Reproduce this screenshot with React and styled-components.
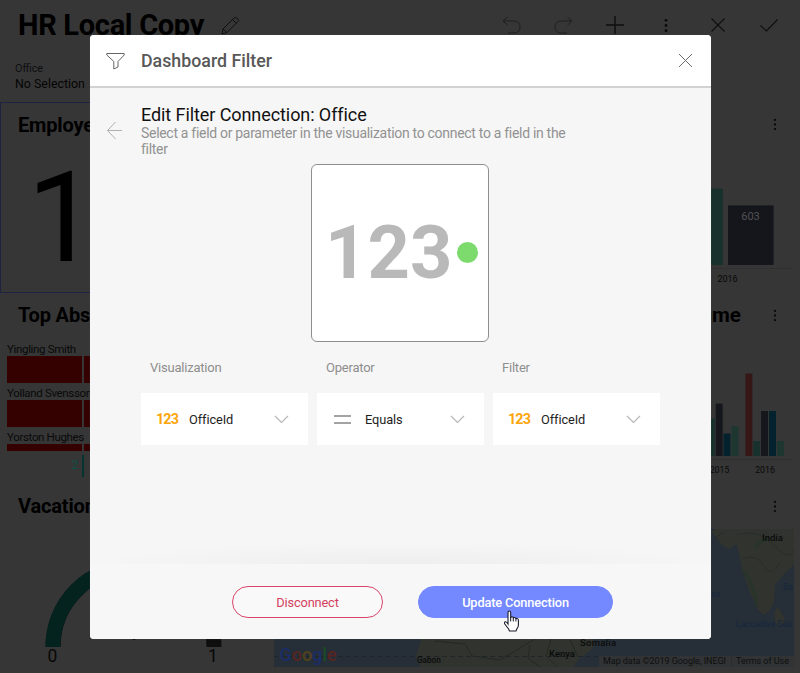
import React from "react";
import styled, { createGlobalStyle } from "styled-components";

const GlobalStyle = createGlobalStyle`
  *, *::before, *::after { box-sizing: border-box; }
  html, body { margin: 0; padding: 0; overflow: hidden; background: #363636; }
  body, button { font-family: Roboto, "Liberation Sans", sans-serif; }
  svg { display: block; flex: none; }
  svg text { font-family: Roboto, "Liberation Sans", sans-serif; }
`;

/* ---------- Dashboard ---------- */

const Dashboard = styled.div`
  width: 800px;
  height: 673px;
  display: flex;
  flex-direction: column;
  overflow: hidden;
  background: #363636;
  color: #000;
`;

const TopBar = styled.header`
  height: 60px;
  padding: 0 18px;
  display: flex;
  align-items: flex-start;
  justify-content: space-between;
`;

const TitleGroup = styled.div`
  display: flex;
  align-items: center;
  gap: 17px;
  height: 50px;
`;

const PageTitle = styled.h1`
  margin: 0;
  font-size: 29px;
  font-weight: 700;
  letter-spacing: -0.3px;
  line-height: 50px;
  white-space: nowrap;
`;

const Tools = styled.div`
  height: 50px;
  margin-right: 3px;
  display: flex;
  align-items: center;
  gap: 31.4px;
`;

const FilterSummary = styled.div`
  height: 42px;
  padding: 1px 15px 0;
`;

const FilterName = styled.div`
  font-size: 10.8px;
  line-height: 16px;
  color: #0f0f0f;
`;

const FilterValue = styled.div`
  font-size: 12.4px;
  line-height: 13px;
  color: #050505;
`;

const Panels = styled.main`
  height: 571px;
  display: grid;
  grid-template-columns: 266px 534px;
  grid-template-rows: 191px 191px 189px;
`;

const Panel = styled.section`
  display: flex;
  flex-direction: column;
  overflow: hidden;
  border: ${(p) => (p.$selected ? "1px solid #1d2340" : "0")};
`;

const PanelHeader = styled.div`
  height: ${(p) => (p.$inset ? 43 : 44)}px;
  flex: none;
  padding: 0 20px 0 ${(p) => (p.$inset ? 17 : 18)}px;
  display: flex;
  align-items: center;
  justify-content: ${(p) => (p.$end ? "flex-end" : "space-between")};
  gap: 29px;
`;

const PanelTitle = styled.h2`
  margin: 0;
  font-size: ${(p) => (p.$wide ? 20.6 : 20)}px;
  font-weight: 700;
  letter-spacing: ${(p) => (p.$wide ? 0 : -0.15)}px;
  line-height: 24px;
  white-space: nowrap;
`;

const BigNumber = styled.div`
  padding-left: 26px;
  font-size: 126px;
  line-height: 144px;
`;

const BarList = styled.div`
  padding: 5px 0 0 7px;
`;

const BarName = styled.div`
  height: ${(p) => p.$height}px;
  padding-top: ${(p) => p.$height - 14}px;
  font-size: 11.5px;
  letter-spacing: -0.34px;
  line-height: 14px;
  color: #090909;
  white-space: nowrap;
`;

const BarTrack = styled.div`
  display: grid;
  grid-template-columns: 75px 1fr;
  gap: 2px;
  height: ${(p) => p.$height}px;
`;

const BarFill = styled.span`
  background: #340000;
`;

const BarMark = styled.div`
  width: 77px;
  height: 22px;
  margin-top: 4px;
  padding-right: 4px;
  border-right: 2px solid #04342d;
  text-align: right;
  font-size: 12px;
  line-height: 21px;
  color: #0b5144;
`;

const MapBox = styled.div`
  padding: 1px 0 0 8px;
`;

/* ---------- Dialog ---------- */

const Overlay = styled.div`
  position: absolute;
  inset: 0 auto auto 0;
  width: 800px;
  height: 673px;
  padding: 35px 89px 34px 90px;
`;

const Dialog = styled.div`
  height: 604px;
  border-radius: 4px;
  overflow: hidden;
  display: flex;
  flex-direction: column;
  background: #f6f6f6;
  box-shadow: 0 0 1px #555;
`;

const DialogHeader = styled.div`
  height: 53px;
  flex: none;
  padding: 0 18px 0 16px;
  display: flex;
  align-items: center;
  background: #fff;
  border-bottom: 2px solid #d2d2d2;
`;

const DialogTitle = styled.div`
  flex: 1;
  margin-left: 16px;
  font-size: 17.8px;
  font-weight: 500;
  line-height: 24px;
  color: #585858;
`;

const DialogBody = styled.div`
  flex: 1;
  padding: 17px 51px 0 16px;
  display: flex;
  align-items: flex-start;
`;

const BackButton = styled.div`
  width: 35px;
  padding-top: 16px;
  flex: none;
`;

const Content = styled.div`
  flex: 1;
  display: flex;
  flex-direction: column;
`;

const Heading = styled.div`
  font-size: 18px;
  letter-spacing: -0.08px;
  line-height: 20px;
  color: #111;
`;

const Hint = styled.div`
  width: 440px;
  height: 39px;
  font-size: 14px;
  letter-spacing: -0.3px;
  line-height: 16px;
  color: #929292;
`;

const Preview = styled.div`
  width: 178px;
  height: 178px;
  margin-left: 170px;
  padding-left: 13px;
  border: 1px solid #8e8e8e;
  border-radius: 6px;
  background: #fff;
  display: flex;
  align-items: center;
`;

const PreviewDigits = styled.span`
  width: 132px;
  font-size: 74px;
  font-weight: 700;
  line-height: 80px;
  color: #b9b9b9;
`;

const Dot = styled.span`
  width: 21px;
  height: 21px;
  margin-top: -1px;
  border-radius: 50%;
  background: #7cdb6c;
`;

const Fields = styled.div`
  margin-top: 16px;
  display: grid;
  grid-template-columns: repeat(3, 167px);
  column-gap: 9px;
`;

const FieldLabel = styled.div`
  height: 35px;
  padding-left: 9px;
  font-size: 13px;
  letter-spacing: -0.22px;
  line-height: 20px;
  color: #8e8e8e;
`;

const Select = styled.div`
  height: 52px;
  padding: 0 19px 0 ${(p) => p.$left || 15}px;
  display: flex;
  align-items: center;
  background: #fff;
  font-size: 12.8px;
  letter-spacing: -0.1px;
  color: #1d1d1d;
`;

const SelectText = styled.span`
  flex: 1;
  margin-left: ${(p) => p.$gap || 10}px;
`;

const NumberType = styled.span`
  width: 23px;
  font-size: 14.4px;
  font-weight: 700;
  letter-spacing: -0.9px;
  color: #fca60c;
  white-space: nowrap;
`;

const FooterShade = styled.div`
  height: 22px;
  flex: none;
  background: radial-gradient(ellipse 50% 100% at 50% 100%, #eeeeee, #f6f6f6);
`;

const DialogFooter = styled.div`
  height: 75px;
  flex: none;
  padding: 22px 98px 0 142px;
  display: flex;
  justify-content: space-between;
  background: #f7f7f7;
`;

const Button = styled.button`
  width: ${(p) => p.$width}px;
  height: 32px;
  padding: 0;
  border: 1px solid ${(p) => (p.$primary ? "#7489ff" : "#d9456a")};
  border-radius: 16px;
  background: ${(p) => (p.$primary ? "#7489ff" : "#f9f9f9")};
  color: ${(p) => (p.$primary ? "#fff" : "#d33f60")};
  font-size: 12.8px;
  letter-spacing: -0.15px;
  font-weight: ${(p) => (p.$primary ? 500 : 400)};
`;

const Pointer = styled.svg`
  position: absolute;
  left: 502px;
  top: 609px;
`;

/* ---------- Icons ---------- */

const Icon = ({ d, w = 20, h = 20, stroke = "#0e0e0e", sw = 1 }) => (
  <svg width={w} height={h} viewBox={`0 0 ${w} ${h}`} fill="none" stroke={stroke} strokeWidth={sw}>
    <path d={d} />
  </svg>
);

const Kebab = ({ w = 10, r = 1.15, step = 4.6 }) => (
  <svg width={w} height="20" viewBox={`0 0 ${w} 20`} fill="#0a0a0a">
    {[-1, 0, 1].map((i) => (
      <circle key={i} cx={w / 2} cy={10.5 + i * step} r={r} />
    ))}
  </svg>
);

const Chevron = () => <Icon d="M1 1L7.5 7.5L14 1" w={15} h={9} stroke="#b5b5b5" sw={1.1} />;

/* ---------- Charts ---------- */

const bars = (list, base) =>
  list.map(([x, w, top, fill], i) => (
    <rect key={i} x={x} y={top} width={w} height={base - top} fill={fill} />
  ));

const HiringChart = () => (
  <svg width="534" height="147" viewBox="266 146 534 147">
    {bars([[678, 45, 188.7, "#19312d"], [728, 45.6, 205.4, "#15161b"]], 265)}
    <path d="M290 268.5H792" stroke="#303030" />
    <text x="750.5" y="220" fontSize="11" fill="#515253" textAnchor="middle">603</text>
    <text x="727.5" y="282" fontSize="9" fill="#070707" textAnchor="middle">2016</text>
  </svg>
);

const TimeChart = () => (
  <svg width="534" height="147" viewBox="266 337 534 147">
    {bars(
      [
        [707.5, 7.2, 418.5, "#19312d"],
        [715.7, 7, 403.6, "#16171c"],
        [723.5, 7, 433.5, "#04222d"],
        [731.5, 7, 426, "#1e3630"],
        [745.4, 7, 373.5, "#351718"],
        [753.2, 7, 441, "#19312d"],
        [761, 7, 411, "#16171c"],
        [769, 7, 411, "#04222d"],
        [777, 7, 441, "#1e3630"],
      ],
      456
    )}
    <path d="M290 459.5H792" stroke="#303030" />
    <text x="719.5" y="472.5" fontSize="8.7" fill="#090909" textAnchor="middle">2015</text>
    <text x="765" y="472.5" fontSize="8.7" fill="#090909" textAnchor="middle">2016</text>
  </svg>
);

const Gauge = () => (
  <svg width="266" height="143" viewBox="0 528 266 143">
    <path d="M53 647A80.5 80.5 0 0 1 214 647" fill="none" stroke="#0e0e0e" strokeWidth="15" />
    <path d="M53 647A80.5 80.5 0 0 1 133.5 566.5" fill="none" stroke="#04231f" strokeWidth="15" />
    <circle cx="134" cy="638" r="2" fill="#0b0b0b" />
    <text x="52.5" y="662" fontSize="17.5" fill="#070707" textAnchor="middle">0</text>
    <text x="213" y="662" fontSize="17.5" fill="#070707" textAnchor="middle">1</text>
  </svg>
);

const googleLetters = [
  ["G", "#1a2d66"], ["o", "#572423"], ["o", "#54421a"], ["g", "#1a2d66"], ["l", "#1a4a27"], ["e", "#572423"],
];

const WorldMap = () => (
  <svg width="520" height="138" viewBox="274 529 520 138">
    <rect x="274" y="529" width="520" height="138" fill="#262f37" />
    <g fill="#30332e">
      <path d="M418 630H594L594 646L590 651L578 660L574 667H420L416 655L421 640Z" />
      <path d="M715 529H794V565L783 575L775 585L774 603L770 610L764 615L758 610L749 590L742 570L738 549L736 544L730 549L722 545L716 537L711 532Z" />
      <path d="M777 606L781 612L785 619L782 625L776 623L774 615Z" />
    </g>
    <path d="M742 570Q753 580 757 607M755 548Q765 535 772 540" fill="none" stroke="#28342a" strokeWidth="3" />
    <path d="M435 641L465 644L472 656L500 660L520 648L535 639M530 645L528 658L540 667M551 639L546 656L557 667M570 640L578 657" fill="none" stroke="#232823" strokeWidth="1" />
    <path d="M737 535Q758 528 774 545T794 550M742 559Q757 553 764 566T780 562M724 532L715 538" fill="none" stroke="#292e29" strokeWidth="1" />
    <path d="M274 656.5H600" stroke="#1f2529" strokeDasharray="5 3" />
    <rect x="599" y="656" width="195" height="11" fill="#313334" />
    <g fontSize="9.5" fontWeight="500" fill="#0a0c0c">
      <text x="762" y="541">India</text>
      <text x="549" y="657">Kenya</text>
      <text x="580" y="645.5" textLength="36">Somalia</text>
      <text x="417" y="663" fontSize="8.2">Gabon</text>
    </g>
    <g fontSize="9" fill="#16263e">
      <text x="736" y="627" textLength="56">Laccadive Sea</text>
      <text x="783" y="590" fontSize="8.5">Ba</text>
      <text x="711" y="597">ea</text>
    </g>
    <g fontSize="9" fill="#0d0f10">
      <text x="603" y="664" textLength="123">Map data ©2019 Google, INEGI</text>
      <text x="736" y="664" textLength="53">Terms of Use</text>
    </g>
    <path d="M731.5 657V667" stroke="#292c2e" />
    <text x="279.5" y="661" fontSize="18" fontWeight="500">
      {googleLetters.map(([c, color], i) => (
        <tspan key={i} fill={color}>{c}</tspan>
      ))}
    </text>
  </svg>
);

const absences = [
  ["Yingling Smith", 14, 27],
  ["Yolland Svensson", 17, 27],
  ["Yorston Hughes", 17, 7],
];

const DialogField = ({ label, children }) => (
  <div>
    <FieldLabel>{label}</FieldLabel>
    {children}
  </div>
);

export default function App() {
  return (
    <>
      <GlobalStyle />
      <Dashboard>
        <TopBar>
          <TitleGroup>
            <PageTitle>HR Local Copy</PageTitle>
            <Icon d="M1 18L2 13L13 2Q14.5 .7 16.5 2.5T17 5.5L6 16.5ZM11.5 3.5L15.5 7.5M2 13L6 16.5" w={19} h={19} />
          </TitleGroup>
          <Tools>
            <Icon d="M5.5 2L1 6L5.5 10M1 6H12Q18 6 18 12T12 18H6" stroke="#1f1f1f" />
            <Icon d="M14.5 2L19 6L14.5 10M19 6H8Q2 6 2 12T8 18H14" stroke="#1f1f1f" />
            <Icon d="M10 1V19M1 10H19" sw={1.4} />
            <Kebab w={20} r={1.4} step={5.2} />
            <Icon d="M3.5 3.5L16.5 16.5M16.5 3.5L3.5 16.5" sw={1.1} />
            <Icon d="M1.5 10.5L7.5 16L18.5 4.5" sw={1.1} />
          </Tools>
        </TopBar>
        <FilterSummary>
          <FilterName>Office</FilterName>
          <FilterValue>No Selection</FilterValue>
        </FilterSummary>
        <Panels>
          <Panel $selected>
            <PanelHeader $inset><PanelTitle>Employees</PanelTitle></PanelHeader>
            <BigNumber>1</BigNumber>
          </Panel>
          <Panel>
            <PanelHeader $end><Kebab /></PanelHeader>
            <HiringChart />
          </Panel>
          <Panel>
            <PanelHeader><PanelTitle>Top Absences</PanelTitle></PanelHeader>
            <BarList>
              {absences.map(([name, nameHeight, barHeight]) => (
                <React.Fragment key={name}>
                  <BarName $height={nameHeight}>{name}</BarName>
                  <BarTrack $height={barHeight}><BarFill /><BarFill /></BarTrack>
                </React.Fragment>
              ))}
              <BarMark>2</BarMark>
            </BarList>
          </Panel>
          <Panel>
            <PanelHeader $end><PanelTitle $wide>Overtime</PanelTitle><Kebab /></PanelHeader>
            <TimeChart />
          </Panel>
          <Panel>
            <PanelHeader><PanelTitle>Vacations</PanelTitle></PanelHeader>
            <Gauge />
          </Panel>
          <Panel>
            <PanelHeader $end><Kebab /></PanelHeader>
            <MapBox><WorldMap /></MapBox>
          </Panel>
        </Panels>
      </Dashboard>

      <Overlay>
        <Dialog>
          <DialogHeader>
            <Icon d="M.8 1.5H18.2V3L12 9.5V15L7.8 17V9.5L.8 3Z" w={19} h={18} stroke="#666" />
            <DialogTitle>Dashboard Filter</DialogTitle>
            <Icon d="M1 1L14 14M14 1L1 14" w={15} h={15} stroke="#6c6c6c" />
          </DialogHeader>
          <DialogBody>
            <BackButton>
              <Icon d="M9.5 1L1.5 9.5L9.5 18M1.5 9.5H16" w={17} h={19} stroke="#b0b0b0" />
            </BackButton>
            <Content>
              <Heading>Edit Filter Connection: Office</Heading>
              <Hint>Select a field or parameter in the visualization to connect to a field in the filter</Hint>
              <Preview>
                <PreviewDigits>123</PreviewDigits>
                <Dot />
              </Preview>
              <Fields>
                <DialogField label="Visualization">
                  <Select><NumberType>123</NumberType><SelectText>OfficeId</SelectText><Chevron /></Select>
                </DialogField>
                <DialogField label="Operator">
                  <Select $left={17}>
                    <Icon d="M0 2H17M0 9H17" w={17} h={11} stroke="#858585" sw={1.6} />
                    <SelectText $gap={14}>Equals</SelectText>
                    <Chevron />
                  </Select>
                </DialogField>
                <DialogField label="Filter">
                  <Select><NumberType>123</NumberType><SelectText>OfficeId</SelectText><Chevron /></Select>
                </DialogField>
              </Fields>
            </Content>
          </DialogBody>
          <FooterShade />
          <DialogFooter>
            <Button $width={151}>Disconnect</Button>
            <Button $width={195} $primary>Update Connection</Button>
          </DialogFooter>
        </Dialog>
      </Overlay>
      <Pointer width="20" height="24" viewBox="0 0 20 24">
        <path
          d="M6 15V3.5Q6 2 7.3 2T8.7 3.5V9Q8.8 7.7 10.1 7.7T11.3 9.3Q11.5 8.3 12.7 8.5T13.9 10Q14.2 9.2 15.2 9.5T16.4 11V16Q16.3 18.5 14.8 20L14 22H7.5L6.6 20L2.8 15Q2 13.3 3.2 12.8T6 15Z"
          fill="#fff" stroke="#1b1c2b" strokeWidth="1.1"
        />
        <path d="M8.7 8V12.5M11.3 9V12.5M13.9 10V12.5" stroke="#1b1c2b" />
      </Pointer>
    </>
  );
}
